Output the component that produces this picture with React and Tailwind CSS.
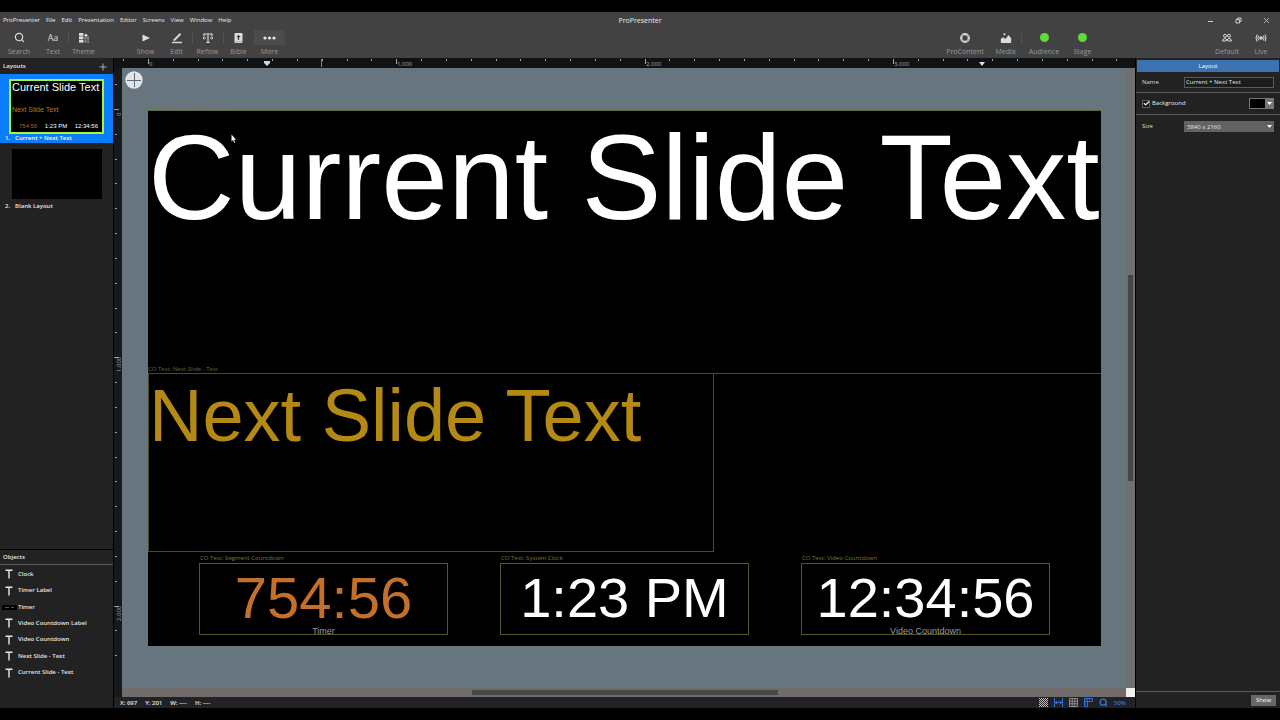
import React from 'react';
import { Search, Check } from 'lucide-react';

const menuItems = ['ProPresenter', 'File', 'Edit', 'Presentation', 'Editor', 'Screens', 'View', 'Window', 'Help'];

const objects = [
  { name: 'Clock' },
  { name: 'Timer Label' },
  { name: 'Timer', thumb: true },
  { name: 'Video Countdown Label' },
  { name: 'Video Countdown' },
  { name: 'Next Slide - Text' },
  { name: 'Current Slide - Text' },
];

const slideBoxes = [
  { tag: 'CO Text: Segment Countdown', text: '754:56', label: 'Timer', place: 'left-[51px]', style: 'text-[58px] text-[#c4702a]' },
  { tag: 'CO Text: System Clock', text: '1:23 PM', place: 'left-[352px]', style: 'text-[56px] text-white' },
  { tag: 'CO Text: Video Countdown', text: '12:34:56', label: 'Video Countdown', place: 'left-[653px]', style: 'text-[56px] text-white' },
];

// 100 slide units in screen pixels
const STEP = 24.83;

function ToolButton({ label, width = 'w-[31px]', active, children }) {
  return (
    <button className={`${width} flex flex-col items-center shrink-0`}>
      <span className={`h-[15px] w-full flex items-center justify-center text-[#dcdcdc] ${active ? 'bg-[#4c4c4c]' : ''}`}>
        {children}
      </span>
      <span className="text-[7px] leading-[10px] mt-[2px] text-[#989898] whitespace-nowrap">{label}</span>
    </button>
  );
}

function Divider() {
  return <span className="w-px h-3 mt-[2px] -mr-px bg-[#525252] shrink-0" />;
}

function ThemeIcon() {
  return (
    <svg width="12" height="12" viewBox="0 0 12 12" fill="currentColor">
      <rect x="1" y="1" width="4.4" height="2.8" />
      <rect x="1" y="4.4" width="4.4" height="2.8" />
      <rect x="1" y="7.8" width="4.4" height="2.8" />
      <path d="M6 3.4 8 1.6l1.8 1.8L8 5z" />
      <path d="M6.4 5.6h2v1.6h-2zM9.2 4.8h1.6v1.6H9.2z" opacity=".7" />
      <path d="M6.5 8.2h1.8v2.4H6.5zM9.2 7.2H11v1.4H9.2zM9.2 9.4H11v1.4H9.2z" opacity=".6" />
    </svg>
  );
}

function PlayIcon() {
  return (
    <svg width="10" height="10" viewBox="0 0 10 10" fill="currentColor">
      <path d="M1.5 1.5 9 5 1.5 8.500z" />
    </svg>
  );
}

function EditIcon() {
  return (
    <svg width="12" height="12" viewBox="0 0 12 12" fill="none" stroke="currentColor">
      <path d="M1 10.5h10" strokeWidth="1.4" />
      <path d="M2.800 8.600 9.500 1.800" strokeWidth="2" />
    </svg>
  );
}

function ReflowIcon() {
  return (
    <svg width="12" height="12" viewBox="0 0 12 12" fill="none" stroke="currentColor">
      <path d="M2 4V2h8v2M6 2v8.500M4.300 10.500h3.400" strokeWidth="1.2" />
      <path d="M1 6h3M8 6h3M2.500 4.500 1 6l1.500 1.500M9.500 4.500 11 6 9.500 7.500" strokeWidth=".9" />
    </svg>
  );
}

function BibleIcon() {
  return (
    <svg width="9" height="12" viewBox="0 0 9 12">
      <rect x=".5" y="1" width="8" height="10" rx="1" fill="#dcdcdc" />
      <path d="M4.5 3v5M2.8 4.6h3.4" stroke="#3a3a3a" strokeWidth="1.2" />
      <path d="M1.5 9.8h6.5" stroke="#8a8a8a" strokeWidth=".6" />
    </svg>
  );
}

function ProContentIcon() {
  return (
    <svg width="12" height="12" viewBox="0 0 12 12" fill="none">
      <circle cx="6" cy="6" r="3.8" stroke="#d8d8d8" strokeWidth="2.2" />
      <path d="M2 3.8 5 3M8.5 2l1.3 3M9.8 7.5 7.3 9.6M4.3 9.8 2.4 7" stroke="#777" strokeWidth=".6" />
    </svg>
  );
}

function MediaIcon() {
  return (
    <svg width="12" height="12" viewBox="0 0 12 12" fill="currentColor">
      <path d="M.8 10V7l2.400-1.800L5.500 7 8.500 3l2.700 3.200V10q0 1-1 1H1.800q-1 0-1-1z" />
      <circle cx="4.500" cy="2.300" r="1.100" />
    </svg>
  );
}

function DefaultIcon() {
  return (
    <svg width="12" height="12" viewBox="0 0 12 12" fill="none" stroke="currentColor">
      <circle cx="4" cy="3.800" r="1.500" />
      <circle cx="8" cy="3.800" r="1.500" />
      <path d="M1.500 9q.3-2.500 2.500-2.500.8 0 2 1.500 1.200-1.500 2-1.500 2.200 0 2.500 2.500-2.500.6-4.500-1-2 1.600-4.500 1z" />
    </svg>
  );
}

function LiveIcon() {
  return (
    <svg width="12" height="12" viewBox="0 0 12 12" fill="none" stroke="currentColor">
      <circle cx="6" cy="6" r="1.800" fill="currentColor" stroke="none" />
      <path d="M3.600 3.600q-1.400 2.400 0 4.800M8.400 3.600q1.400 2.400 0 4.800M2 2.500q-2 3.500 0 7M10 2.500q2 3.500 0 7" />
    </svg>
  );
}

function TitleBar() {
  return (
    <div className="h-4 grid grid-cols-[1fr_auto_1fr] items-center text-[6px] text-[#ececec]">
      <nav className="flex gap-[6px] pl-[3px]">
        {menuItems.map((item) => (
          <button key={item} className="leading-none">{item}</button>
        ))}
      </nav>
      <span className="text-[7px] leading-none">ProPresenter</span>
      <div className="flex justify-end items-center gap-[21px] pr-[10px]">
        <button aria-label="Minimize">
          <svg width="7" height="7" viewBox="0 0 7 7"><path d="M1 4.5h5" stroke="#ccc" /></svg>
        </button>
        <button aria-label="Restore">
          <svg width="7" height="7" viewBox="0 0 7 7" fill="none" stroke="#ccc"><path d="M1 2.5h3.500V6H1zM2.500 2.500V1H6v3.500H4.500" /></svg>
        </button>
        <button aria-label="Close">
          <svg width="7" height="7" viewBox="0 0 7 7"><path d="m1 1 5 5M6 1 1 6" stroke="#ccc" strokeWidth=".8" /></svg>
        </button>
      </div>
    </div>
  );
}

function Toolbar() {
  return (
    <div className="h-[30px] flex items-start justify-between pt-[2px]">
      <div className="flex">
        <ToolButton label="Search" width="w-[38px]"><Search size={11} strokeWidth={2.5} /></ToolButton>
        <ToolButton label="Text" width="w-[30px]"><span className="text-[9px] leading-none">Aa</span></ToolButton>
        <Divider />
        <ToolButton label="Theme"><ThemeIcon /></ToolButton>
        <div className="flex ml-[31px]">
          <ToolButton label="Show"><PlayIcon /></ToolButton>
          <ToolButton label="Edit"><EditIcon /></ToolButton>
          <Divider />
          <ToolButton label="Reflow"><ReflowIcon /></ToolButton>
          <Divider />
          <ToolButton label="Bible"><BibleIcon /></ToolButton>
          <ToolButton label="More" active>
            <svg width="13" height="4" viewBox="0 0 13 4" fill="#e6e6e6">
              <circle cx="2" cy="2" r="1.6" /><circle cx="6.5" cy="2" r="1.6" /><circle cx="11" cy="2" r="1.6" />
            </svg>
          </ToolButton>
        </div>
      </div>
      <div className="flex pr-[2px]">
        <div className="flex mr-[112px]">
          <ToolButton label="ProContent" width="w-[50px]"><ProContentIcon /></ToolButton>
          <ToolButton label="Media"><MediaIcon /></ToolButton>
          <Divider />
          <ToolButton label="Audience" width="w-[46px]"><span className="size-[9px] rounded-full bg-[#5fdb3c]" /></ToolButton>
          <ToolButton label="Stage"><span className="size-[9px] rounded-full bg-[#5fdb3c]" /></ToolButton>
        </div>
        <ToolButton label="Default" width="w-[34px]"><DefaultIcon /></ToolButton>
        <ToolButton label="Live" width="w-[34px]"><LiveIcon /></ToolButton>
      </div>
    </div>
  );
}

function Sidebar() {
  return (
    <aside className="w-[113px] shrink-0 flex flex-col bg-[#222] text-[6px] font-semibold text-[#e6e6e6]">
      <div className="h-4 pt-px flex items-center justify-between pl-[3px] pr-[6px]">
        <h2>Layouts</h2>
        <button aria-label="Add layout">
          <svg width="8" height="8" viewBox="0 0 8 8"><path d="M4 .5v7M.5 4h7" stroke="#bbb" strokeWidth=".9" /></svg>
        </button>
      </div>
      <button className="h-[69px] bg-[#0a7dfc] pt-1 text-left text-white">
        <span className="block ml-[9px] w-[95px] h-[55px] border-2 border-[#a6f53c] bg-black pl-px font-['Liberation_Sans',Arial,sans-serif] font-normal whitespace-nowrap overflow-hidden">
          <span className="block text-[11px] leading-[13px]">Current Slide Text</span>
          <span className="block mt-3 text-[7px] leading-[8px] text-[#b0820f]">Next Slide Text</span>
          <span className="flex justify-between mt-[9px] pl-[7px] pr-1 text-[6px] leading-[7px]">
            <span className="text-[#a86224]">754:56</span>
            <span>1:23 PM</span>
            <span>12:34:56</span>
          </span>
        </span>
        <span className="flex gap-[5px] pl-[5px] leading-[9px]"><span>1.</span><span>Current + Next Text</span></span>
      </button>
      <button className="pt-[6px] text-left">
        <span className="block ml-3 w-[90px] h-[50px] bg-black" />
        <span className="flex gap-[5px] pl-[5px] mt-[3px] leading-[9px]"><span>2.</span><span>Blank Layout</span></span>
      </button>
      <h2 className="mt-auto h-4 flex items-center pl-[3px] border-t border-t-black border-b border-b-[#5a5a5a]">Objects</h2>
      <ul className="h-[115px] mt-px mb-[27px] grid grid-rows-7">
        {objects.map((obj) => (
          <li key={obj.name} className="flex items-center">
            <span className="w-[18px] flex justify-center">
              {obj.thumb ? (
                <span className="w-[15px] h-[5px] bg-black flex items-center justify-center gap-[2px]">
                  <span className="w-[4px] h-px bg-[#8a4a1c]" />
                  <span className="w-[3px] h-px bg-[#8a4a1c]" />
                </span>
              ) : (
                <svg width="8" height="10" viewBox="0 0 8 10"><path d="M.5 1.200h7M4 1v8.500" stroke="#e8e8e8" strokeWidth="1.400" /></svg>
              )}
            </span>
            <span>{obj.name}</span>
          </li>
        ))}
      </ul>
    </aside>
  );
}

function TopRuler() {
  const ticks = Array.from({ length: 41 }, (_, i) => i - 1);
  return (
    <svg className="w-full h-[10px] shrink-0 bg-[#101214]" fontSize="6">
      {ticks.map((i) => {
        const x = Math.round(34 + i * STEP) + 0.5;
        return <path key={i} d={`M${x} 1v${i % 10 === 0 ? 5 : 2}`} stroke="#a5a5a5" />;
      })}
      {[0, 1, 2, 3].map((n) => (
        <text key={n} x={35 + Math.round(n * 10 * STEP)} y="8" fill="#a8a8a8">{n ? `${n},000` : '0'}</text>
      ))}
      <path d="M207.500 1v8" stroke="#888" />
      <path d="M150 3h6v2l-3 3-3-3z" fill="#c8dcda" />
      <path d="M865 4h6l-3 4z" fill="#e0e0e0" />
    </svg>
  );
}

function SideRuler() {
  const ticks = Array.from({ length: 24 }, (_, i) => i - 1);
  return (
    <svg className="w-2 h-full shrink-0 bg-[#15191b]" fontSize="6">
      {ticks.map((i) => {
        const y = Math.round(41 + i * STEP) + 0.5;
        return <path key={i} d={i % 10 === 0 ? `M0 ${y}h5` : `M1 ${y}h2`} stroke="#9a9a9a" />;
      })}
      <text transform="translate(7 48) rotate(-90)" fill="#a8a8a8">0</text>
      <text transform="translate(7 304) rotate(-90)" fill="#a8a8a8">1,000</text>
      <text transform="translate(7 553) rotate(-90)" fill="#a8a8a8">2,000</text>
    </svg>
  );
}

function Slide() {
  return (
    <div className="relative mt-[42px] ml-[26px] w-[953px] h-[536px] bg-black font-['Liberation_Sans',Arial,sans-serif] whitespace-nowrap">
      <span className="absolute -top-[9px] left-0 text-[6px] leading-[8px] font-['Open_Sans',sans-serif] text-[#6d7869]">CO Text: Current Slide - Text</span>
      <div className="absolute left-0 top-0 w-full h-[264px] border-t border-b border-t-[#5c6440] border-b-[#4a4c22] text-white text-[120px] leading-[132px]">
        Current Slide Text
      </div>
      <span className="absolute left-0 top-[255px] text-[6px] leading-[8px] font-['Open_Sans',sans-serif] text-[#66673f]">CO Text: Next Slide - Text</span>
      <div className="absolute left-0 top-[263px] w-[566px] h-[179px] border border-[#4a4c22] text-[#b58a14] text-[74px] leading-[84px]">
        Next Slide Text
      </div>
      {slideBoxes.map((box) => (
        <div key={box.tag} className={`absolute top-[453px] w-[249px] h-[72px] border border-[#55562f] text-center ${box.place}`}>
          <span className="absolute left-0 -top-[10px] text-[6px] leading-[8px] font-['Open_Sans',sans-serif] text-[#77783c]">{box.tag}</span>
          <div className={`leading-[68px] ${box.style}`}>{box.text}</div>
          {box.label && <div className="absolute inset-x-0 -bottom-[2px] text-[9px] leading-[10px] text-[#9a9a9a]">{box.label}</div>}
        </div>
      ))}
      <svg className="absolute left-[83px] top-[24px]" width="6" height="10" viewBox="0 0 6 10">
        <path d="M.5.5v7l1.500-1.400 1.200 2.700 1-.5L3 5.700h2.200z" fill="#f2f2f2" />
      </svg>
    </div>
  );
}

function StatusBar() {
  return (
    <div className="h-[11px] shrink-0 flex items-center justify-between bg-[#222226] pl-[6px] pr-[9px] text-[6px] font-semibold text-[#e6e6e6]">
      <div className="flex gap-2 leading-none">
        <span>X: 697</span>
        <span>Y: 201</span>
        <span>W: ----</span>
        <span>H: ----</span>
      </div>
      <div className="flex items-center gap-[6px] text-[#2f74dd]">
        <button aria-label="Transparency">
          <svg width="9" height="9" viewBox="0 0 9 9" fill="#c4c4c4">
            {Array.from({ length: 41 }, (_, i) => (
              <rect key={i} x={(i * 2) % 9} y={Math.floor((i * 2) / 9)} width="1" height="1" />
            ))}
          </svg>
        </button>
        <button aria-label="Guides">
          <svg width="9" height="9" viewBox="0 0 9 9" fill="none" stroke="currentColor">
            <path d="M.5 0v9M8.500 0v9M1 4.500h7M3 2.800 1.500 4.500 3 6.200M6 2.800l1.500 1.700L6 6.200" />
          </svg>
        </button>
        <button aria-label="Grid">
          <svg width="9" height="9" viewBox="0 0 9 9" fill="none" stroke="#a4a4a4" strokeWidth=".8">
            <path d="M.5.5h8v8h-8zM3.200.5v8M5.800.5v8M.5 3.200h8M.5 5.800h8" />
          </svg>
        </button>
        <button aria-label="Rulers">
          <svg width="9" height="9" viewBox="0 0 9 9" fill="none" stroke="currentColor">
            <path d="M.5.5h8v3h-5v5h-3zM3 .5V3M5.500.5V2M.5 3.500H3M.5 6H2" />
          </svg>
        </button>
        <button aria-label="Zoom"><Search size={9} strokeWidth={3.5} /></button>
        <span className="leading-none">50%</span>
      </div>
    </div>
  );
}

function Editor() {
  return (
    <main className="flex-1 min-w-0 flex flex-col ml-px">
      <TopRuler />
      <div className="flex-1 min-h-0 flex">
        <SideRuler />
        <div className="flex-1 min-w-0 flex flex-col">
          <div className="flex-1 min-h-0 flex">
            <div className="relative flex-1 min-w-0 bg-[#67757e] overflow-hidden">
              <Slide />
              <button aria-label="Add object" className="absolute left-[3px] top-[3px]">
                <svg width="18" height="18" viewBox="0 0 18 18">
                  <circle cx="9" cy="9" r="8.700" fill="#dde5ea" />
                  <path d="M9.500 2v14M2 9.500h14" stroke="#5f6c75" />
                </svg>
              </button>
            </div>
            <div className="w-[9px] shrink-0 bg-[#6f6f6f] flex flex-col items-center pt-[207px]">
              <span className="w-[5px] h-[206px] bg-[#464646]" />
            </div>
          </div>
          <div className="h-[9px] shrink-0 bg-[#6f6c6a] flex items-center">
            <span className="ml-[350px] w-[306px] h-[5px] bg-[#464646]" />
            <span className="ml-auto size-[9px] bg-[#f0f0f0]" />
          </div>
        </div>
      </div>
      <StatusBar />
    </main>
  );
}

function Inspector() {
  return (
    <aside className="w-[144px] ml-px shrink-0 flex flex-col bg-[#222] text-[6px] text-[#dcdcdc]">
      <button className="mt-[2px] mx-px h-3 bg-[#3d73b3] text-white leading-none">Layout</button>
      <div className="h-[21px] flex items-center justify-between px-[6px] border-b border-[#5a5a5a]">
        <label htmlFor="layout-name">Name</label>
        <input id="layout-name" defaultValue="Current + Next Text" className="w-[90px] h-[11px] border border-[#5a5a5a] bg-[#1c1c1c] px-px text-[#e6e6e6]" />
      </div>
      <div className="h-[22px] flex items-center justify-between px-[6px] border-b border-[#5a5a5a]">
        <label className="flex items-center gap-[2px] text-[#ececec]">
          <span className="relative size-[8px]">
            <input type="checkbox" defaultChecked className="peer block appearance-none size-[8px] border border-[#5c5c5c] bg-[#181818]" />
            <Check size={7} strokeWidth={4} className="absolute left-px top-0 text-white hidden peer-checked:block pointer-events-none" />
          </span>
          Background
        </label>
        <button aria-label="Background color" className="w-[25px] h-[11px] flex border border-[#777] bg-black">
          <span className="ml-auto w-2 h-full bg-[#777] flex items-center justify-center">
            <svg width="5" height="3" viewBox="0 0 5 3"><path d="M0 0h5L2.500 3z" fill="#fff" /></svg>
          </span>
        </button>
      </div>
      <div className="h-[23px] flex items-center justify-between px-[6px]">
        <label htmlFor="layout-size">Size</label>
        <span className="relative w-[90px] h-[11px]">
          <select id="layout-size" className="block appearance-none w-full h-full bg-[#626262] pl-[3px] leading-none text-[#e6e6e6]">
            <option>3840 x 2160</option>
          </select>
          <svg className="absolute right-[2px] top-1 pointer-events-none" width="5" height="3" viewBox="0 0 5 3"><path d="M0 0h5L2.500 3z" fill="#fff" /></svg>
        </span>
      </div>
      <div className="mt-auto h-[17px] flex items-center justify-end pr-1 border-t border-[#5a5a5a]">
        <button className="w-[25px] h-[11px] bg-[#686868] text-white leading-none">Show</button>
      </div>
    </aside>
  );
}

export default function App() {
  return (
    <div className="h-screen bg-black py-3 flex flex-col overflow-hidden font-['Open_Sans','Noto_Sans',sans-serif]">
      <header className="shrink-0 bg-[#424242]">
        <TitleBar />
        <Toolbar />
      </header>
      <div className="flex-1 min-h-0 flex">
        <Sidebar />
        <Editor />
        <Inspector />
      </div>
    </div>
  );
}
